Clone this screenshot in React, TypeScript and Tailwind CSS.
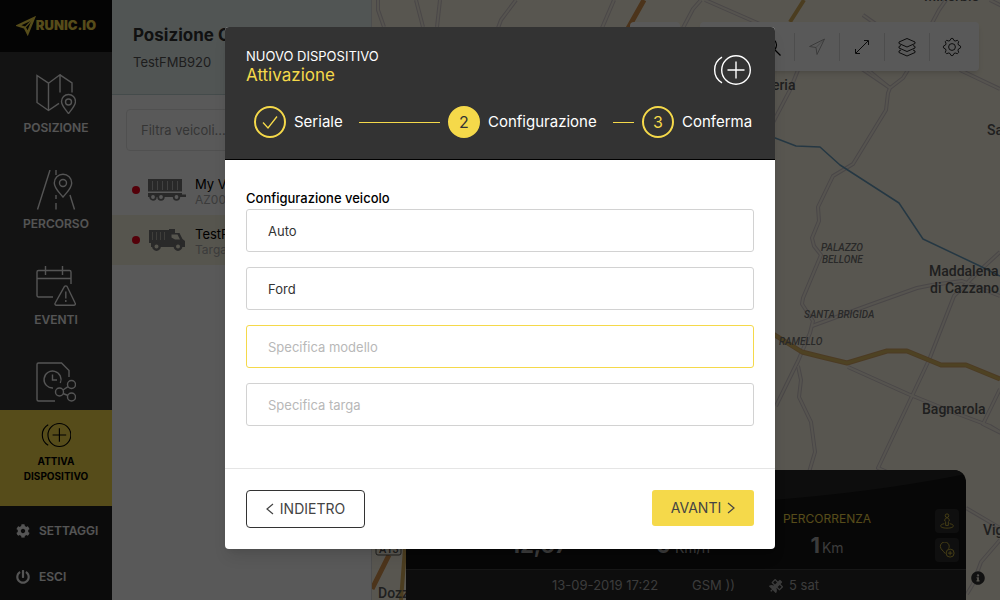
import React, { ReactNode } from 'react';
import { FaCog, FaPowerOff, FaInfoCircle, FaSatellite } from 'react-icons/fa';

interface IIconProps {
  className?: string;
}

interface INavItem {
  label: string;
  showLabel: boolean;
  icon: ReactNode;
}

interface IStep {
  label: string;
  state: 'done' | 'current' | 'next';
  number: number;
}

const LogoMark: React.FC<IIconProps> = ({ className }) => (
  <svg viewBox="0 0 18 18" className={className} fill="none" stroke="currentColor" strokeWidth="2.2">
    <path d="M16 2 10.5 15.5 8 10.5 2 8.5Z" />
    <path d="M16 2 8 10.5" strokeWidth="1.2" />
  </svg>
);

const MapPinIcon = () => (
  <svg viewBox="0 0 40 40" className="size-10" fill="none" stroke="currentColor" strokeWidth="1.4">
    <path d="M24 18.5V.8L12.5 9.2 1 1.5v27l11.5 8 10.5-7.2M12.5 9.2v27M24 .8l12 8v9.7" />
    <path d="M32.5 39.5c-3-4-7-8-7-12a7 7 0 0 1 14 0c0 4-4 8-7 12Z" />
    <circle cx="32.5" cy="28" r="3" />
  </svg>
);

const RouteIcon = () => (
  <svg viewBox="0 0 40 40" className="size-10" fill="none" stroke="currentColor" strokeWidth="1.4">
    <path d="M14 0 1.5 39.5M34 25l4.5 14.5M20 0v5M20 25v4M20 33v6.5" />
    <path d="M27 27c-4-5-8.7-8.5-8.7-14a8.7 8.7 0 0 1 17.4 0c0 5.5-4.7 9-8.7 14Z" />
    <circle cx="27" cy="13" r="3.5" />
  </svg>
);

const EventsIcon = () => (
  <svg viewBox="0 0 40 40" className="size-10" fill="none" stroke="currentColor" strokeWidth="1.4">
    <path d="M35 18V6a1.5 1.5 0 0 0-1.5-1.5h-31A1.5 1.5 0 0 0 1 6v23.5A1.5 1.5 0 0 0 2.5 31H17M1 12.5h34M9.5 0v9M26.5 0v9" />
    <path d="M28.5 20.5a1.6 1.6 0 0 1 2.6 0l8 16.5a1.5 1.5 0 0 1-1.3 2.3H20.5a1.5 1.5 0 0 1-1.3-2.3Z" />
    <path d="M29.8 25.5v7M29.8 34v2" />
  </svg>
);

const ReportIcon = () => (
  <svg viewBox="0 0 40 40" className="size-10" fill="none" stroke="currentColor" strokeWidth="1.4">
    <path d="M33 15V8.5L25.5 1h-23A1.5 1.5 0 0 0 1 2.5v35A1.5 1.5 0 0 0 2.5 39H19" />
    <path d="M17 26a8.5 8.5 0 1 1 7.3-5M16.5 12.5V18H21" />
    <circle cx="23.5" cy="30" r="4" />
    <circle cx="35.5" cy="22.5" r="4" />
    <circle cx="35.5" cy="35" r="4" />
    <path d="m27 28 5-3.3M27 31.5l5 2" />
  </svg>
);

const AddDeviceIcon: React.FC<IIconProps> = ({ className }) => (
  <svg viewBox="0 0 38 30" className={className} fill="none" stroke="currentColor" strokeWidth="1.4">
    <circle cx="23" cy="15" r="14.3" />
    <path d="M23 6.5v17M14.5 15h17M9 2.2a14.8 14.8 0 0 0 0 25.6" />
  </svg>
);

const TrailerIcon = () => (
  <svg viewBox="0 0 38 22" className="w-[38px]" fill="currentColor">
    <path d="M0 0h34v12.5H0ZM0 14h34v1.5h4V18H0Z" />
    <path d="M4.5 2v9M9.5 2v9M14.5 2v9M19.5 2v9M24.5 2v9M29.5 2v9" stroke="#fff" opacity=".5" />
    {[5, 13, 28.5].map((cx) => (
      <circle key={cx} cx={cx} cy="18" r="2.8" fill="#fff" stroke="currentColor" strokeWidth="1.8" />
    ))}
  </svg>
);

const TruckIcon = () => (
  <svg viewBox="0 0 38 22" className="w-[38px]" fill="currentColor">
    <path d="M1 1h20V0h6v4h4.5l3 6 2.5 2v6H3v-4H1Z" />
    <path d="M4.5 3v8M8.5 3v8M12.5 3v8M16.5 3v8" stroke="#f7f2de" opacity=".5" />
    <path d="M23.5 5.5h6l2.5 5h-5l-3.5-2Z" fill="#f7f2de" />
    {[8.5, 30].map((cx) => (
      <circle key={cx} cx={cx} cy="17.5" r="3.2" fill="#f7f2de" stroke="currentColor" strokeWidth="2.4" />
    ))}
  </svg>
);

const SearchIcon = () => (
  <svg viewBox="0 0 20 20" className="size-5" fill="none" stroke="currentColor" strokeWidth="1.2">
    <circle cx="8" cy="8" r="6.5" />
    <path d="m12.5 12.5 6 6" />
  </svg>
);

const LocateIcon = () => (
  <svg viewBox="0 0 20 20" className="size-5" fill="none" stroke="currentColor" strokeLinejoin="round">
    <path d="M17.5 2 10 17.5l-1-7-6.5-1Z" />
    <path d="M17.5 2 9 10.5" strokeWidth=".6" />
  </svg>
);

const ExpandIcon = () => (
  <svg viewBox="0 0 20 20" className="size-5" fill="none" stroke="currentColor">
    <path d="M4 16 16 4M12 3.5h4.5V8M3.5 12v4.5H8" />
  </svg>
);

const LayersIcon = () => (
  <svg viewBox="0 0 20 20" className="size-5" fill="none" stroke="currentColor" strokeLinejoin="round">
    <path d="m10 1.5 8 3.5v1.5L10 10 2 6.5V5Z" />
    <path d="m4 8.5-2 1V11l8 3.5 8-3.5V9.5l-2-1" />
    <path d="m4 13-2 1v1.5L10 19l8-3.5V14l-2-1" />
  </svg>
);

// Eight rounded teeth around the hub
const gearOutline = Array.from({ length: 32 }, (_, i) => {
  const angle = ((i - 0.5) * Math.PI) / 16;
  const radius = i % 4 < 2 ? 8.6 : 6.8;
  return `${(10 + radius * Math.sin(angle)).toFixed(2)},${(10 - radius * Math.cos(angle)).toFixed(2)}`;
}).join(' ');

const GearIcon = () => (
  <svg viewBox="0 0 20 20" className="size-5" fill="none" stroke="currentColor" strokeLinejoin="round">
    <circle cx="10" cy="10" r="3.4" />
    <polygon points={gearOutline} />
  </svg>
);

const StreetViewIcon = () => (
  <svg viewBox="0 0 18 18" className="size-4" fill="none" stroke="currentColor">
    <circle cx="9" cy="3" r="2" />
    <path d="M9 5.5c-2 0-2.5 1.5-2.5 3.5l1 1v4h3v-4l1-1c0-2-.5-3.5-2.5-3.5ZM6 12c-6 1-6 5 3 5s9-4 3-5" />
  </svg>
);

const AddPlaceIcon = () => (
  <svg viewBox="0 0 18 18" className="size-4" fill="none" stroke="currentColor">
    <path d="M7 13C5 10 1.5 8 1.5 5a5 5 0 0 1 10 0c0 1-.3 1.7-.8 2.5" />
    <circle cx="12.5" cy="12.5" r="4.5" />
    <path d="M12.5 10v5M10 12.5h5" />
  </svg>
);

const navItems: INavItem[] = [
  { label: 'POSIZIONE', showLabel: true, icon: <MapPinIcon /> },
  { label: 'PERCORSO', showLabel: true, icon: <RouteIcon /> },
  { label: 'EVENTI', showLabel: true, icon: <EventsIcon /> },
  { label: 'REPORT', showLabel: false, icon: <ReportIcon /> },
];

const steps: IStep[] = [
  { label: 'Seriale', state: 'done', number: 1 },
  { label: 'Configurazione', state: 'current', number: 2 },
  { label: 'Conferma', state: 'next', number: 3 },
];

const Sidebar = () => (
  <aside className="flex w-28 shrink-0 flex-col bg-[#383838] text-[#f2f2f2]">
    <div className="flex h-[52px] shrink-0 items-center justify-center bg-[#0c0c0c] text-[#f5d94a]">
      <LogoMark className="w-5" />
      <span className="text-[13px] font-black">RUNIC.IO</span>
    </div>
    <nav className="min-h-0 flex-1 overflow-hidden">
      {navItems.map((item) => (
        <a
          key={item.label}
          href="#"
          aria-label={item.label}
          className="flex h-24 flex-col items-center gap-1.5 pt-[22px] text-xs font-semibold"
        >
          {item.icon}
          {item.showLabel && <span>{item.label}</span>}
        </a>
      ))}
    </nav>
    <a
      href="#"
      className="flex h-24 shrink-0 flex-col items-center gap-[7px] bg-[#f5d94a] pt-[13px] text-center text-[10px] leading-[15px] font-bold text-black"
    >
      <AddDeviceIcon className="h-6" />
      <span>
        ATTIVA
        <br />
        DISPOSITIVO
      </span>
    </a>
    <div className="shrink-0 bg-[#222] pt-0.5 text-xs font-semibold">
      <a href="#" className="flex h-[46px] items-center gap-[9px] pl-4">
        <FaCog size={14} />
        SETTAGGI
      </a>
      <a href="#" className="flex h-[46px] items-center gap-[9px] pl-4">
        <FaPowerOff size={14} />
        ESCI
      </a>
    </div>
  </aside>
);

const VehicleRow: React.FC<{ name: string; detail: string; icon: ReactNode; active?: boolean }> = ({
  name,
  detail,
  icon,
  active = false,
}) => (
  <li className={`flex h-[50px] items-center pl-5 ${active ? 'bg-[#f7f2de]' : ''}`}>
    <span className="mr-2 size-2 shrink-0 rounded-full bg-[#f0001c]" />
    <span className="mr-[9px] shrink-0 text-[#757575]">{icon}</span>
    <span className="pt-[3px] text-[13px] leading-[15px] whitespace-nowrap">
      <span className="block text-black">{name}</span>
      <span className="block text-xs leading-[15px] text-[#aaa]">{detail}</span>
    </span>
  </li>
);

const VehiclePanel = () => (
  <section className="w-[260px] shrink-0 overflow-hidden border-r border-[#ddd] bg-white">
    <header className="h-[95px] border-b border-[#c4d6d6] bg-[#e9f3f1] px-[21px] pt-[22px] whitespace-nowrap">
      <h1 className="text-[17px] leading-[26px] font-bold text-[#333]">Posizione Corrente</h1>
      <p className="text-[13px] leading-7 text-[#555]">TestFMB920</p>
    </header>
    <div className="px-3.5 pt-3.5">
      <input
        type="text"
        aria-label="Filtra veicoli"
        placeholder="Filtra veicoli..."
        className="h-[42px] w-full rounded border border-[#e5e5e5] px-3.5 text-[13px] placeholder:text-[#999]"
      />
    </div>
    <ul className="mt-3.5">
      <VehicleRow name="My Vehicle" detail="AZ000AZ" icon={<TrailerIcon />} />
      <VehicleRow name="TestFMB920" detail="Targa" icon={<TruckIcon />} active />
    </ul>
  </section>
);

const minorRoads = [
  'M378 0v10l6 17',
  'M416 0l7 27',
  'M440 0l-3 27',
  'M516 0l-15 20-3 8',
  'M614 0l-12 28',
  'M701 0l-8 9-10 19',
  'M705 0l80 35 77 34 28 19',
  'M863 15l27 19',
  'M946 0l-7 10-8 15-20 40-8 13-13 10-2 5-2 17-33 54-20 12-15 31 1 14-7 17 2 8 7 9-18 43-1 6 11 17-3 12-12 28-22 45',
  'M990 0l12 6',
  'M798 70l-8 20-22 42',
  'M868 70l22 18',
  'M960 70l40 19',
  'M812 326l60-22 45-16 15-3 30-4 38 15',
  'M1000 252l-24 22-22 22-25 64-17 36-34 72 60 26',
  'M848 367l60 27 42 17 40 15 10 6',
  'M1000 389l-17 35 20 10',
  'M798 366l3 14-2 17 12 25 4 30-8 27',
  'M966 508l34 20',
  'M1000 540l-19 22-8 22-6 10',
];

const mainRoad = 'M770 332l32 20 20 5 25 6 40-12h20l34 14h25l34 14';

const RegionMap = () => (
  <svg
    viewBox="372 0 628 600"
    preserveAspectRatio="xMinYMin slice"
    className="absolute inset-0 size-full bg-[#fcf6e4] font-[Roboto,sans-serif]"
    fill="none"
    strokeLinejoin="round"
  >
    {minorRoads.map((d) => (
      <path key={d} d={d} stroke="#d3cbcd" strokeWidth="4" />
    ))}
    {minorRoads.map((d) => (
      <path key={d} d={d} stroke="#f6efe3" strokeWidth="2" />
    ))}
    <path d="M770 136l26 10 24 1 20 18 59 38 24 36 59 28 18 9" stroke="#6a9fc0" strokeWidth="1.5" />
    <path d="M644 0l-18 32M389 555l-17 34" stroke="#d9944e" strokeWidth="5" />
    <path d="M804 0l-14 22M405 549l-4 51" stroke="#d8ae5c" strokeWidth="4" />
    <path d={mainRoad} stroke="#d8a868" strokeWidth="5" />
    <path d={mainRoad} stroke="#e0bd64" strokeWidth="3" />
    <g fill="#5a5a5a" fontSize="14" fontWeight="500">
      <text x="924" y="1">Minerbio</text>
      <text x="752" y="90">Siberia</text>
      <text x="987" y="135">Sala</text>
      <text x="929" y="276">Maddalena</text>
      <text x="930" y="293">di Cazzano</text>
      <text x="922" y="414">Bagnarola</text>
      <text x="983" y="535">Vigorso</text>
      <text x="378" y="598">Dozza</text>
    </g>
    <g fill="#777" fontSize="10" fontStyle="italic" fontWeight="500">
      <text x="821" y="251">PALAZZO</text>
      <text x="822" y="263">BELLONE</text>
      <text x="804" y="318">SANTA BRIGIDA</text>
      <text x="779" y="345">RAMELLO</text>
    </g>
    <rect x="376" y="541" width="25" height="14" rx="2" fill="#fcf6e4" stroke="#555" />
    <text x="379" y="553" fill="#555" fontSize="11" fontWeight="500">
      A13
    </text>
  </svg>
);

const mapTools = [
  { label: 'Posizione attuale', icon: <LocateIcon />, muted: true },
  { label: 'Espandi', icon: <ExpandIcon /> },
  { label: 'Livelli', icon: <LayersIcon /> },
  { label: 'Impostazioni mappa', icon: <GearIcon /> },
];

const MapToolbar = () => (
  <div className="absolute top-[22px] right-[21px] flex gap-5">
    <div className="h-[49px] w-[50px] rounded bg-white shadow-md" />
    <div className="flex h-[49px] w-[279px] items-center justify-end rounded bg-white pr-[5px] shadow-md">
      <button type="button" aria-label="Cerca" className="flex flex-1 justify-end pr-3 text-black">
        <SearchIcon />
      </button>
      {mapTools.map((tool) => (
        <button
          key={tool.label}
          type="button"
          aria-label={tool.label}
          className={`flex h-7 w-[45px] items-center justify-center border-l border-[#ddd] ${tool.muted ? 'text-[#aaa]' : 'text-[#222]'}`}
        >
          {tool.icon}
        </button>
      ))}
    </div>
  </div>
);

const DevicePanel = () => (
  <section className="absolute right-[34px] bottom-0 left-[34px] overflow-hidden rounded-tr-xl bg-[#141414] text-[#aaa]">
    <svg viewBox="0 0 560 36" preserveAspectRatio="none" className="block h-9 w-full" fill="#262626">
      <path d="M0 0h560v4Q400 36 200 36H0Z" />
    </svg>
    <div className="flex h-[63px] justify-end pt-[3px] pr-[7px]">
      <div className="flex w-36 items-baseline justify-center pt-5">
        <strong className="text-[22px] leading-8">12,67</strong>
      </div>
      <div className="flex w-36 items-baseline justify-center gap-1 pt-5">
        <strong className="text-[22px] leading-8">0</strong>
        <span className="text-sm">Km/h</span>
      </div>
      <dl className="flex w-36 flex-col items-center">
        <dt className="text-xs leading-5 text-[#f5d94a]">PERCORRENZA</dt>
        <dd className="flex items-baseline gap-0.5">
          <strong className="text-[22px] leading-8">1</strong>
          <span className="text-sm">Km</span>
        </dd>
      </dl>
      <div className="ml-9 flex flex-col gap-[5px] text-[#d8bf3e]">
        <button
          type="button"
          aria-label="Street view"
          className="flex size-6 items-center justify-center rounded bg-[#2c2c2c]"
        >
          <StreetViewIcon />
        </button>
        <button
          type="button"
          aria-label="Aggiungi luogo"
          className="flex size-6 items-center justify-center rounded bg-[#2c2c2c]"
        >
          <AddPlaceIcon />
        </button>
      </div>
    </div>
    <div className="flex h-[31px] items-center justify-end gap-[34px] border-t border-[#444] bg-[#252525] pt-0.5 pr-[147px] text-[13px]">
      <span>13-09-2019 17:22</span>
      <span>GSM ))</span>
      <span className="flex items-center gap-1.5">
        <FaSatellite size={14} />5 sat
      </span>
    </div>
  </section>
);

const StepMarker: React.FC<{ step: IStep }> = ({ step }) => {
  const fill = step.state === 'current' ? 'bg-[#f5d94a] text-[#333]' : 'text-[#f5d94a]';

  return (
    <span
      className={`flex size-8 shrink-0 items-center justify-center rounded-full border-2 border-[#f5d94a] text-base ${fill}`}
    >
      {step.state === 'done' ? (
        <svg viewBox="0 0 16 16" className="size-4" fill="none" stroke="currentColor" strokeWidth="1.3">
          <path d="M1 8.5 6 14l9-11.5" />
        </svg>
      ) : (
        step.number
      )}
    </span>
  );
};

const Stepper = () => (
  <ol className="flex pl-2 text-[15px] text-white">
    {steps.map((step, index) => {
      const last = index === steps.length - 1;

      return (
        <li key={step.label} className={`flex items-center ${last ? 'w-28 shrink-0' : 'min-w-0 flex-1'}`}>
          <StepMarker step={step} />
          <span className="ml-2">{step.label}</span>
          {!last && <span className="mr-2 ml-4 flex-1 border-t border-[#f5d94a]" />}
        </li>
      );
    })}
  </ol>
);

const fields = [
  { name: 'tipo', label: 'Tipo', value: 'Auto' },
  { name: 'marca', label: 'Marca', value: 'Ford' },
  { name: 'modello', label: 'Modello', placeholder: 'Specifica modello', focused: true },
  { name: 'targa', label: 'Targa', placeholder: 'Specifica targa' },
];

const ActivationDialog = () => (
  <form
    role="dialog"
    aria-labelledby="dialog-title"
    className="w-full max-w-[550px] overflow-hidden rounded bg-white shadow-lg"
  >
    <header className="border-b border-black bg-[#333] px-[21px] pt-5 pb-[21px]">
      <div className="mb-[21px] flex items-end justify-between">
        <div>
          <p className="text-[13px] leading-[18px] text-white">NUOVO DISPOSITIVO</p>
          <h2 id="dialog-title" className="text-[17px] leading-5 text-[#f5d94a]">
            Attivazione
          </h2>
        </div>
        <AddDeviceIcon className="mr-[3px] w-[38px] text-white" />
      </div>
      <Stepper />
    </header>
    <div className="px-[21px] pt-7 pb-[42px]">
      <fieldset>
        <legend className="text-[13px] leading-[21px] font-medium text-black">Configurazione veicolo</legend>
        <div className="flex flex-col gap-[15px]">
          {fields.map((field) => (
            <input
              key={field.name}
              type="text"
              name={field.name}
              aria-label={field.label}
              defaultValue={field.value}
              placeholder={field.placeholder}
              className={`h-[43px] w-full rounded-[3px] border px-[21px] text-[13px] text-[#333] placeholder:text-[#b8b8b8] focus:outline-none ${field.focused ? 'border-[#f5d94a]' : 'border-[#d2d2d2]'}`}
            />
          ))}
        </div>
      </fieldset>
    </div>
    <footer className="flex items-start justify-between border-t border-[#e5e5e5] p-[21px] text-sm text-[#444]">
      <button
        type="button"
        className="flex h-[38px] w-[119px] items-center justify-center gap-1.5 rounded border border-[#333]"
      >
        <svg viewBox="0 0 8 12" className="h-3" fill="none" stroke="currentColor" strokeWidth="1.2">
          <path d="M7 1 1 6l6 5" />
        </svg>
        INDIETRO
      </button>
      <button
        type="submit"
        className="flex h-9 w-[102px] items-center justify-center gap-1.5 rounded-[3px] bg-[#f5d94a]"
      >
        AVANTI
        <svg viewBox="0 0 8 12" className="h-3" fill="none" stroke="currentColor" strokeWidth="1.2">
          <path d="m1 1 6 5-6 5" />
        </svg>
      </button>
    </footer>
  </form>
);

export default function App() {
  return (
    <div className="relative flex h-screen overflow-hidden font-[Inter,'Liberation_Sans',sans-serif]">
      <Sidebar />
      <VehiclePanel />
      <main className="relative min-w-0 flex-1 overflow-hidden">
        <RegionMap />
        <MapToolbar />
        <DevicePanel />
        <FaInfoCircle size={14} className="absolute right-[15px] bottom-[15px] text-[#333]" />
      </main>
      <div className="absolute inset-0 flex items-start justify-center overflow-auto bg-black/65 pt-[27px]">
        <ActivationDialog />
      </div>
    </div>
  );
}
